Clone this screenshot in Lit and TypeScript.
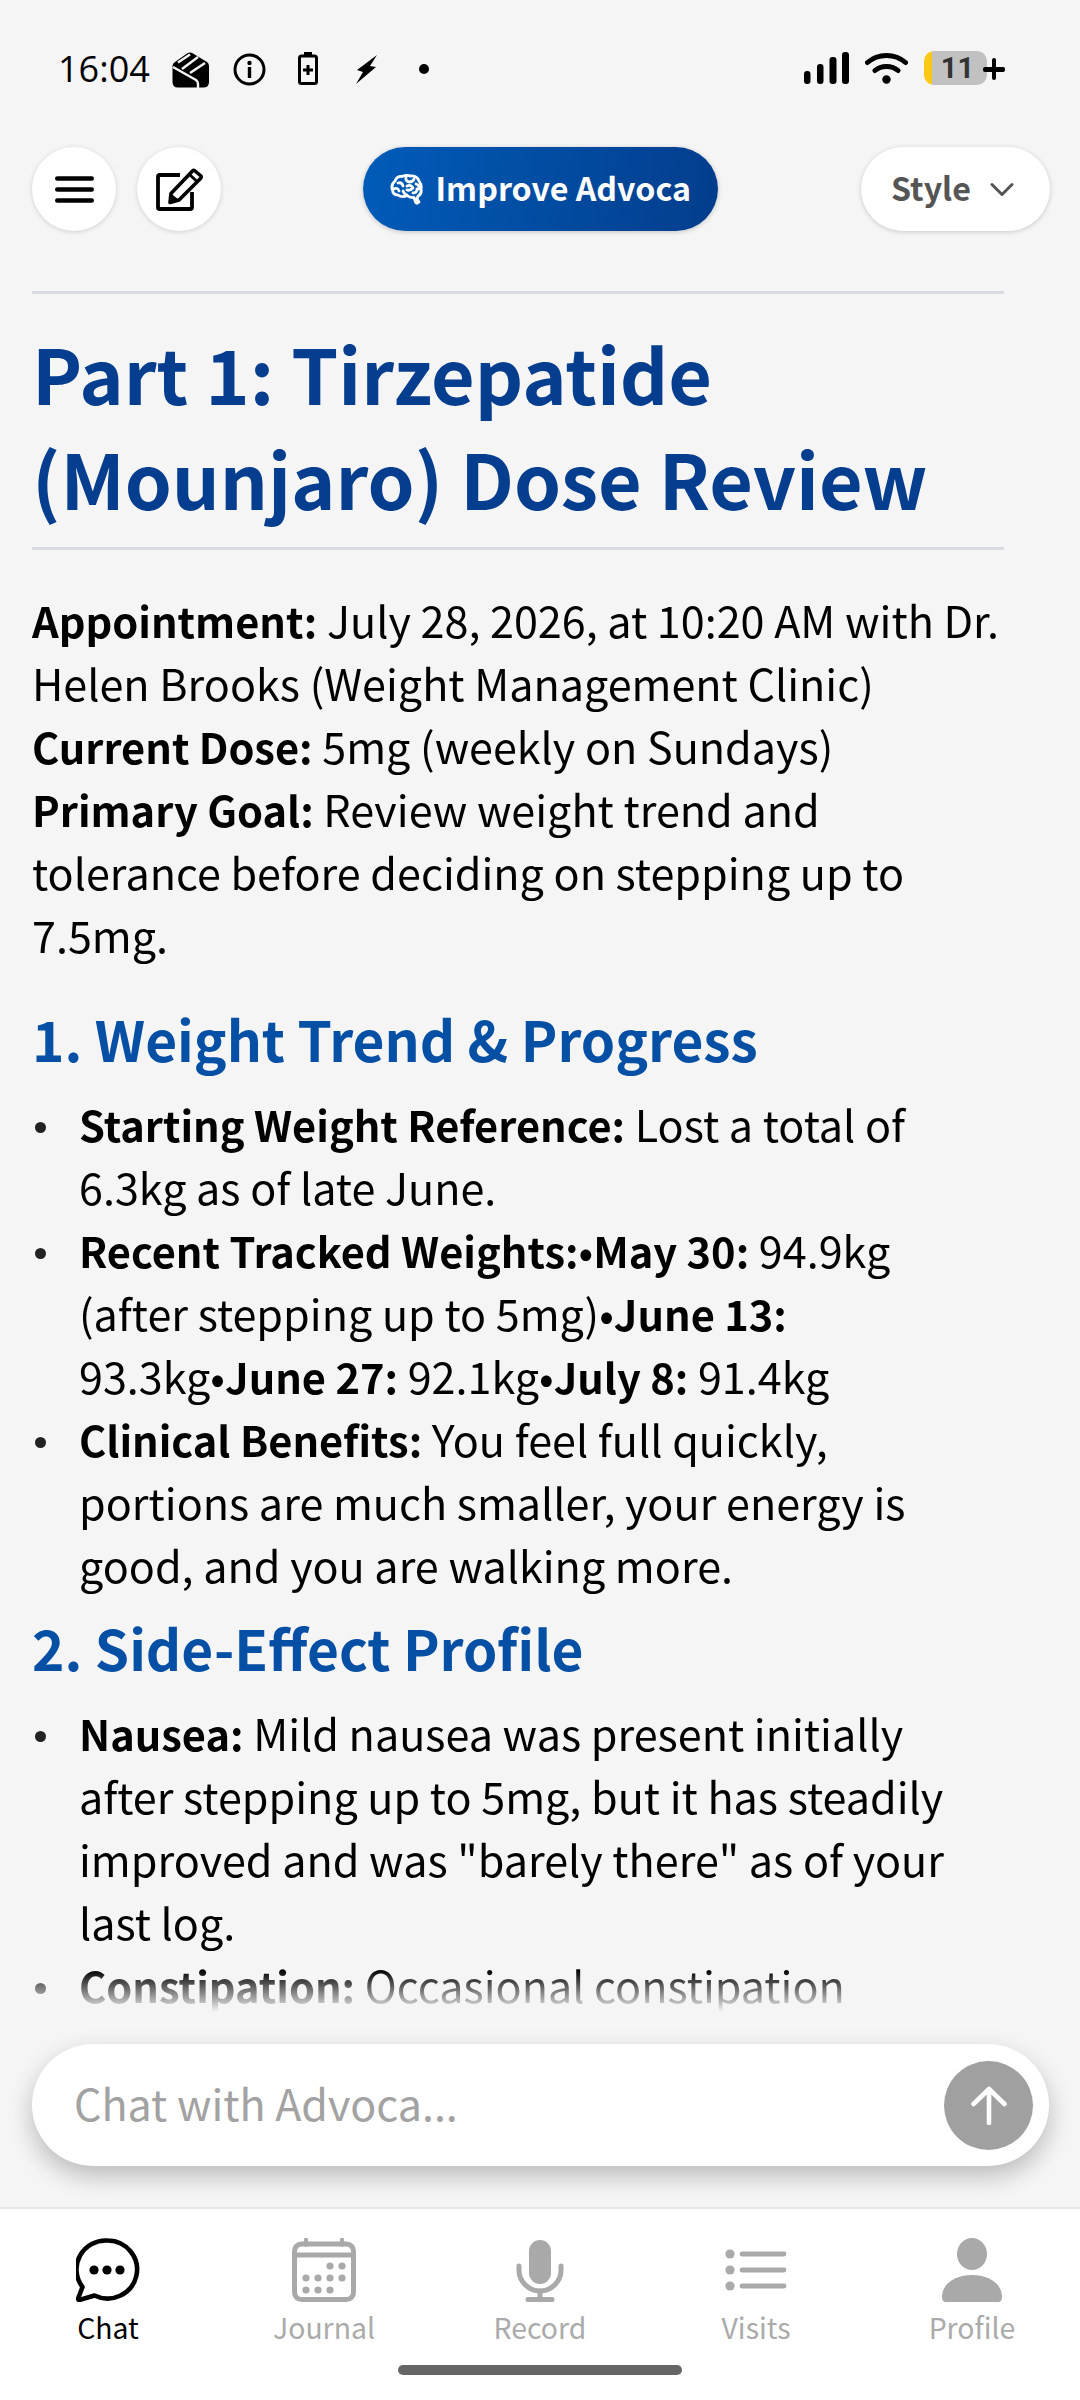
import { LitElement, html, css, svg } from "lit";
import { customElement } from "lit/decorators.js";

const walletIcon = html`<svg class="i-wallet" width="37" height="37" viewBox="0 0 37 37">
  <path d="M15 2.5 Q18 0.5 21 2.5 L35 11 Q37 12.5 37 15 V31 Q37 36.5 31.5 36.5 H6 Q0.5 36.5 0.5 31 V15 Q0.5 12.5 3 11 Z" fill="#000"/>
  <path d="M1 16 L24 29 Q26 30.5 26 33 V37 M10 18 L26 6 M18 22 L33 12 M6 11.5 L18 3.5" stroke="#f5f5f5" stroke-width="2.4" fill="none"/>
</svg>`;
const infoIcon = html`<svg class="i-info" width="33" height="33" viewBox="0 0 33 33">
  <circle cx="16.5" cy="16.5" r="14.5" fill="none" stroke="#000" stroke-width="3"/>
  <circle cx="16.5" cy="10" r="2.2" fill="#000"/>
  <rect x="14.8" y="14" width="3.4" height="11" fill="#000"/>
</svg>`;
const chargeIcon = html`<svg class="i-charge" width="20" height="33" viewBox="0 0 20 33">
  <rect x="6" y="0" width="8" height="4" fill="#000"/>
  <rect x="1.5" y="4" width="17" height="27.5" rx="2" fill="none" stroke="#000" stroke-width="3"/>
  <path d="M10 13 V23 M5 18 H15" stroke="#000" stroke-width="3"/>
</svg>`;
const boltIcon = html`<svg class="i-bolt" width="21" height="29" viewBox="0 0 21 29">
  <path d="M21 0 L14 11 L20 12 L0 29 L7 17 L1 15 Z" fill="#000"/>
</svg>`;
const signalIcon = html`<svg class="i-signal" width="45" height="32" viewBox="0 0 45 32">
  <rect x="0" y="19" width="6.5" height="13" rx="3" fill="#000"/>
  <rect x="13" y="12" width="6.5" height="20" rx="3" fill="#000"/>
  <rect x="25.5" y="5" width="7" height="27" rx="3" fill="#000"/>
  <rect x="38" y="0" width="7" height="32" rx="3" fill="#000"/>
</svg>`;
const wifiIcon = html`<svg class="i-wifi" width="43" height="32" viewBox="0 0 43 32">
  <path d="M2.5 10.5 C13 1 30 1 40.5 10.5 M10 18.5 C16 13 27 13 33 18.5" fill="none" stroke="#000" stroke-width="5" stroke-linecap="round"/>
  <circle cx="21.5" cy="27.5" r="4.2" fill="#000"/>
</svg>`;
const menuIcon = html`<svg width="39" height="27" viewBox="0 0 39 27">
  <path d="M2.3 2.5 H36.7 M2.3 13.5 H36.7 M2.3 24.5 H36.7" stroke="#000" stroke-width="4.6" stroke-linecap="round"/>
</svg>`;
const editIcon = html`<svg width="47" height="43" viewBox="0 0 47 43">
  <path d="M24 7 H3.5 Q2 7 2 8.5 V39.5 Q2 41 3.5 41 H34 Q36 41 36 39.5 V24" fill="none" stroke="#000" stroke-width="3.8"/>
  <path d="M38.5 2.5 L45 8 Q45.5 9.5 44.5 10.5 L23 32 L14 34.5 L15 25.5 L36.5 3 Q37.5 2 38.5 2.5 Z" fill="none" stroke="#000" stroke-width="3.6" stroke-linejoin="round"/>
  <path d="M15 25.5 L23 32 L13.5 35 Z" fill="#000"/>
  <path d="M34 7 L40.5 13" stroke="#000" stroke-width="3"/>
</svg>`;
const brainIcon = html`<svg width="33" height="31" viewBox="0 0 33 31" fill="none" stroke="#fff" stroke-width="2.8" stroke-linecap="round" stroke-linejoin="round">
  <path d="M5 7 Q7 2 12 2.5 Q16 0.5 20 2 Q27 1.5 29 7 Q32 11 31 15 Q32 20 28 22 L27 25 L29 28 Q27 30.5 25.5 28 L24 23.5 Q20 24 17 21.5 Q12 24 8 21 Q3 21 2.5 16 Q0.5 11 5 7 Z"/>
  <path d="M8 9 Q12 8 13 12 M3 15 Q8 13 9 17 M16 3 Q15 7 19 8 Q23 8 24 5 M17 12 Q21 10 23 14 Q20 17 17 16 M26 10 Q30 11 29 15 M23 19 Q27 19 27 15 M13 17 Q14 20 17 21"/>
</svg>`;
const chevronIcon = html`<svg width="24" height="15" viewBox="0 0 24 15">
  <path d="M2 2.5 L12 12.5 L22 2.5" fill="none" stroke="#555" stroke-width="3" stroke-linecap="round" stroke-linejoin="round"/>
</svg>`;
const sendIcon = html`<svg width="36" height="39" viewBox="0 0 36 39">
  <path d="M18 37 V3 M2.5 18 L18 3 L33.5 18" fill="none" stroke="#fff" stroke-width="4.6" stroke-linecap="round" stroke-linejoin="round"/>
</svg>`;

const G = "#a9a9a9";
const chatIcon = svg`<path d="M32 2.5 A29.5 29 0 1 1 18.5 57.5 L3.5 62 Q1.5 62 2.5 59.5 L6.5 49 A29.5 29 0 0 1 32 2.5 Z" fill="none" stroke="#000" stroke-width="4.6" stroke-linejoin="round"/>
  <circle cx="18" cy="32" r="4.6" fill="#000"/><circle cx="31" cy="32" r="4.6" fill="#000"/><circle cx="44" cy="32" r="4.6" fill="#000"/>`;
const calDots = [[38, 28], [50, 28], [14, 40], [26, 40], [38, 40], [50, 40], [14, 52], [26, 52], [38, 52]];
const calIcon = svg`<rect x="2.5" y="6" width="59" height="55.5" rx="7" fill="none" stroke="${G}" stroke-width="5"/>
  <path d="M2.5 17 H61.5" stroke="${G}" stroke-width="5"/>
  <path d="M14 1.5 V7 M50 1.5 V7" stroke="${G}" stroke-width="4" stroke-linecap="round"/>
  ${calDots.map(([x, y]) => svg`<circle cx="${x}" cy="${y}" r="3.6" fill="${G}"/>`)}`;
const micIcon = svg`<rect x="21" y="2" width="22" height="44" rx="11" fill="${G}"/>
  <path d="M11 28 V32 A21 21 0 0 0 53 32 V28" fill="none" stroke="${G}" stroke-width="5" stroke-linecap="round"/>
  <path d="M32 53 V61 M20 61.5 H44" fill="none" stroke="${G}" stroke-width="5" stroke-linecap="round"/>`;
const listIcon = svg`<circle cx="6" cy="16" r="4.6" fill="${G}"/><circle cx="6" cy="32" r="4.6" fill="${G}"/><circle cx="6" cy="48" r="4.6" fill="${G}"/>
  <path d="M18 16 H60 M18 32 H60 M18 48 H60" stroke="${G}" stroke-width="4.8" stroke-linecap="round"/>`;
const profIcon = svg`<ellipse cx="32" cy="16" rx="15" ry="16" fill="${G}"/>
  <path d="M2 59 C2 45 16 37 32 37 C48 37 62 45 62 59 Q62 64 58 64 H6 Q2 64 2 59 Z" fill="${G}"/>`;

const NAV = [
  { label: "Chat", icon: chatIcon, active: true },
  { label: "Journal", icon: calIcon },
  { label: "Record", icon: micIcon },
  { label: "Visits", icon: listIcon },
  { label: "Profile", icon: profIcon },
];

@customElement("app-root")
export class AppRoot extends LitElement {
  static styles = css`
    :host {
      display: flex;
      flex-direction: column;
      width: 1080px;
      height: 2400px;
      overflow: hidden;
      background: #f5f5f5;
      font-family: "Noto Sans CJK JP", "Noto Sans", sans-serif;
      color: #000;
    }
    .status {
      height: 147px;
      flex: none;
      padding: 51px 93px 0 58px;
      box-sizing: border-box;
      display: flex;
      align-items: flex-start;
    }
    .time {
      font-family: "Open Sans", sans-serif;
      font-size: 36px;
      line-height: 36px;
      width: 92px;
      flex: none;
    }
    .status svg { display: block; flex: none; }
    .i-wallet { margin-left: 22px; }
    .i-info { margin-left: 24px; margin-top: 2px; }
    .i-charge { margin-left: 32px; margin-top: 1px; }
    .i-bolt { margin-left: 38px; margin-top: 4px; }
    .dot { width: 10px; height: 10px; border-radius: 50%; background: #000; margin-left: 42px; margin-top: 13px; flex: none; }
    .spacer { flex: 1; }
    .i-signal { margin-top: 1px; }
    .i-wifi { margin-left: 16px; margin-top: 1px; }
    .batt {
      margin-left: 16px;
      width: 63px;
      height: 34px;
      border-radius: 10px;
      flex: none;
      background: linear-gradient(90deg, #fdc715 8px, #c1c1c1 8px);
      display: flex;
      align-items: center;
      justify-content: center;
      font-family: Roboto, sans-serif;
      font-size: 29px;
      font-weight: 700;
      color: #333;
      line-height: 34px;
      padding-left: 4px;
      box-sizing: border-box;
    }
    .plus { position: relative; width: 0; flex: none; }
    .plus::before, .plus::after { content: ""; position: absolute; background: #000; border-radius: 2px; }
    .plus::before { left: -4px; top: 16px; width: 22px; height: 4.6px; }
    .plus::after { left: 4.7px; top: 7px; width: 4.6px; height: 22px; }

    .topbar {
      flex: none;
      height: 84px;
      padding: 0 30px 0 32px;
      display: grid;
      grid-template-columns: 1fr auto 1fr;
      align-items: center;
      position: relative;
      z-index: 2;
    }
    .tb-left { display: flex; gap: 21px; }
    .tb-right { display: flex; justify-content: flex-end; }
    .round {
      width: 84px; height: 84px; border-radius: 50%; background: #fff;
      display: flex; align-items: center; justify-content: center;
      box-shadow: 0 1px 5px rgba(0,0,0,.15);
    }
    .improve {
      height: 84px;
      width: 355px;
      margin-right: 2px;
      border-radius: 42px;
      background: linear-gradient(100deg, #005cb9, #033d8c);
      color: #fff;
      display: flex; align-items: center; gap: 13px;
      padding-left: 27px;
      box-sizing: border-box;
      font-size: 32.2px;
      font-weight: 600;
      box-shadow: 0 1px 5px rgba(0,0,0,.2);
    }
    .improve span, .style span { padding-bottom: 5px; }
    .style {
      height: 84px; width: 189px; border-radius: 42px; background: #fff;
      display: flex; align-items: center; gap: 19px; padding-left: 30px; box-sizing: border-box;
      color: #555; font-size: 32.2px; font-weight: 600;
      box-shadow: 0 1px 5px rgba(0,0,0,.18);
    }
    .scroll {
      flex: none;
      height: 1772px;
      margin-top: 9px;
      overflow: hidden;
      padding: 51px 75px 0 32px;
      box-sizing: border-box;
      font-size: 43.1px;
      line-height: 63px;
      -webkit-mask-image: linear-gradient(180deg, #000 1730px, transparent 1772px);
      mask-image: linear-gradient(180deg, #000 1730px, transparent 1772px);
    }
    hr { border: 0; height: 3px; background: #d8dce2; margin: 0 1px 0 0; }
    h1 {
      margin: 0;
      font-size: 75.3px;
      line-height: 105px;
      font-weight: 700;
      color: #053d8f;
      height: 253px;
      box-sizing: border-box;
      padding-top: 26px;
    }
    p { margin: 0; padding-top: 38px; }
    b { font-weight: 700; font-size: 41.6px; line-height: 1; }
    h2 {
      margin: 30px 0 0;
      font-size: 55px;
      line-height: 84px;
      font-weight: 700;
      color: #0550a4;
    }
    h2.second { margin-top: 9px; }
    ul { list-style: none; margin: 12px 0 0; padding: 0; }
    li { position: relative; padding-left: 47px; }
    li::before {
      content: "";
      position: absolute;
      left: 3px;
      top: 30px;
      width: 11px;
      height: 11px;
      border-radius: 50%;
      background: #222;
    }

    .composer { flex: none; padding: 0 31px 0 32px; margin-top: 32px; position: relative; z-index: 2; }
    .pill {
      height: 122px;
      border-radius: 61px;
      background: #fff;
      display: flex;
      align-items: center;
      justify-content: space-between;
      padding: 0 16px 0 42px;
      font-size: 43px;
      color: #a2a2a2;
      box-shadow: 0 10px 24px rgba(0,0,0,.24);
    }
    .pill > span:first-child { padding-bottom: 6px; }
    .send {
      width: 89px; height: 89px; border-radius: 50%; background: #a0a0a0;
      display: flex; align-items: center; justify-content: center;
    }
    .nav {
      flex: none;
      margin-top: 41px;
      flex-grow: 1;
      background: #fff;
      border-top: 2px solid #e6e6e6;
      display: grid;
      grid-template-columns: repeat(5, 216px);
      padding-top: 29px;
      box-sizing: border-box;
      position: relative;
    }
    .tab { display: flex; flex-direction: column; align-items: center; color: #aaa; font-size: 28.4px; line-height: 40px; }
    .tab.on { color: #000; }
    .tab svg { display: block; margin-bottom: 5px; }
    .home {
      position: absolute; left: 398px; width: 284px; top: 156px; height: 10px; border-radius: 5px; background: #666;
    }
  `;

  render() {
    return html`
      <div class="status">
        <span class="time">16:04</span>
        ${walletIcon}${infoIcon}${chargeIcon}${boltIcon}<span class="dot"></span>
        <span class="spacer"></span>
        ${signalIcon}${wifiIcon}<span class="batt">11</span><span class="plus"></span>
      </div>
      <div class="topbar">
        <div class="tb-left">
          <div class="round">${menuIcon}</div>
          <div class="round">${editIcon}</div>
        </div>
        <div class="improve">${brainIcon}<span>Improve Advoca</span></div>
        <div class="tb-right"><div class="style"><span>Style</span>${chevronIcon}</div></div>
      </div>
      <div class="scroll">
        <hr />
        <h1>Part 1: Tirzepatide (Mounjaro) Dose Review</h1>
        <hr />
        <p>
          <b>Appointment:</b> July 28, 2026, at 10:20 AM with Dr. Helen Brooks (Weight Management Clinic)<br />
          <b>Current Dose:</b> 5mg (weekly on Sundays)<br />
          <b>Primary Goal:</b> Review weight trend and tolerance before deciding on stepping up to 7.5mg.
        </p>
        <h2>1. Weight Trend &amp; Progress</h2>
        <ul>
          <li><b>Starting Weight Reference:</b> Lost a total of 6.3kg as of late June.</li>
          <li><b>Recent Tracked Weights:</b>•<b>May 30:</b> 94.9kg (after stepping up to 5mg)•<b>June 13:</b> 93.3kg•<b>June 27:</b> 92.1kg•<b>July 8:</b> 91.4kg</li>
          <li><b>Clinical Benefits:</b> You feel full quickly, portions are much smaller, your energy is good, and you are walking more.</li>
        </ul>
        <h2 class="second">2. Side-Effect Profile</h2>
        <ul>
          <li><b>Nausea:</b> Mild nausea was present initially after stepping up to 5mg, but it has steadily improved and was "barely there" as of your last log.</li>
          <li><b>Constipation:</b> Occasional constipation</li>
        </ul>
      </div>
      <div class="composer">
        <div class="pill"><span>Chat with Advoca...</span><span class="send">${sendIcon}</span></div>
      </div>
      <div class="nav">
        ${NAV.map(
          (n) => html`<div class="tab ${n.active ? "on" : ""}">
            <svg width="64" height="64" viewBox="0 0 64 64">${n.icon}</svg><span>${n.label}</span>
          </div>`
        )}
        <div class="home"></div>
      </div>
    `;
  }
}
